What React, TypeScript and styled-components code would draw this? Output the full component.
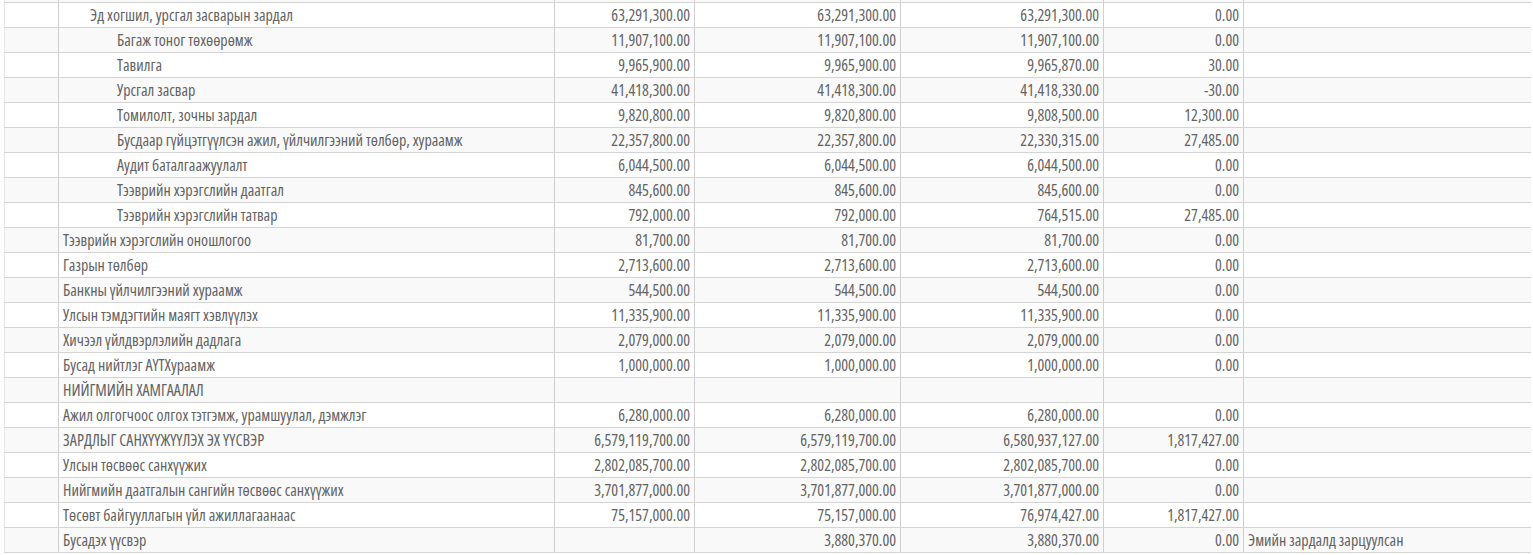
import React from "react";
import styled, { createGlobalStyle } from "styled-components";

const GlobalStyle = createGlobalStyle`
  html, body {
    margin: 0;
    padding: 0;
    background: #ffffff;
    overflow: hidden;
  }
`;

const Page = styled.div`
  padding-left: 4px;
  height: 555px;
  overflow: hidden;
`;

const Scroller = styled.div`
  margin-top: -23px;
`;

const Table = styled.table`
  width: 1526px;
  table-layout: fixed;
  border-collapse: collapse;
  font-family: "Open Sans", "Liberation Sans", sans-serif;
  font-stretch: 75%;
  font-weight: 400;
  font-size: 16px;
  color: #636363;
  border-left: 1px solid #e6e6e6;
`;

const Row = styled.tr<{ $striped: boolean }>`
  background: ${(p) => (p.$striped ? "#f9f9f9" : "#ffffff")};
`;

const Cell = styled.td`
  height: 24px;
  padding: 0 4px;
  border-top: 1px solid #d4d4d4;
  border-bottom: 1px solid #d4d4d4;
  border-left: 1px solid #cfcfcf;
  white-space: nowrap;
  overflow: hidden;
  line-height: 24px;
  &:first-child {
    border-left: none;
  }
`;

const NameCell = styled(Cell)<{ $level: number }>`
  padding-left: ${(p) => 4 + p.$level * 27}px;
`;

const NumCell = styled(Cell)`
  text-align: right;
`;

const NoteCell = styled(Cell)`
  text-align: left;
`;

type Line = {
  name: string;
  level: number;
  nums: string[];
  note?: string;
};

const rows: Line[] = [
  { name: "", level: 0, nums: ["", "", "", ""] },
  { name: "Эд хогшил, урсгал засварын зардал", level: 1, nums: ["63,291,300.00", "63,291,300.00", "63,291,300.00", "0.00"] },
  { name: "Багаж тоног төхөөрөмж", level: 2, nums: ["11,907,100.00", "11,907,100.00", "11,907,100.00", "0.00"] },
  { name: "Тавилга", level: 2, nums: ["9,965,900.00", "9,965,900.00", "9,965,870.00", "30.00"] },
  { name: "Урсгал засвар", level: 2, nums: ["41,418,300.00", "41,418,300.00", "41,418,330.00", "-30.00"] },
  { name: "Томилолт, зочны зардал", level: 2, nums: ["9,820,800.00", "9,820,800.00", "9,808,500.00", "12,300.00"] },
  { name: "Бусдаар гүйцэтгүүлсэн ажил, үйлчилгээний төлбөр, хураамж", level: 2, nums: ["22,357,800.00", "22,357,800.00", "22,330,315.00", "27,485.00"] },
  { name: "Аудит баталгаажуулалт", level: 2, nums: ["6,044,500.00", "6,044,500.00", "6,044,500.00", "0.00"] },
  { name: "Тээврийн хэрэгслийн даатгал", level: 2, nums: ["845,600.00", "845,600.00", "845,600.00", "0.00"] },
  { name: "Тээврийн хэрэгслийн татвар", level: 2, nums: ["792,000.00", "792,000.00", "764,515.00", "27,485.00"] },
  { name: "Тээврийн хэрэгслийн оношлогоо", level: 0, nums: ["81,700.00", "81,700.00", "81,700.00", "0.00"] },
  { name: "Газрын төлбөр", level: 0, nums: ["2,713,600.00", "2,713,600.00", "2,713,600.00", "0.00"] },
  { name: "Банкны үйлчилгээний хураамж", level: 0, nums: ["544,500.00", "544,500.00", "544,500.00", "0.00"] },
  { name: "Улсын тэмдэгтийн маягт хэвлүүлэх", level: 0, nums: ["11,335,900.00", "11,335,900.00", "11,335,900.00", "0.00"] },
  { name: "Хичээл үйлдвэрлэлийн дадлага", level: 0, nums: ["2,079,000.00", "2,079,000.00", "2,079,000.00", "0.00"] },
  { name: "Бусад нийтлэг АҮТХураамж", level: 0, nums: ["1,000,000.00", "1,000,000.00", "1,000,000.00", "0.00"] },
  { name: "НИЙГМИЙН ХАМГААЛАЛ", level: 0, nums: ["", "", "", ""] },
  { name: "Ажил олгогчоос олгох тэтгэмж, урамшуулал, дэмжлэг", level: 0, nums: ["6,280,000.00", "6,280,000.00", "6,280,000.00", "0.00"] },
  { name: "ЗАРДЛЫГ САНХҮҮЖҮҮЛЭХ ЭХ ҮҮСВЭР", level: 0, nums: ["6,579,119,700.00", "6,579,119,700.00", "6,580,937,127.00", "1,817,427.00"] },
  { name: "Улсын төсвөөс санхүүжих", level: 0, nums: ["2,802,085,700.00", "2,802,085,700.00", "2,802,085,700.00", "0.00"] },
  { name: "Нийгмийн даатгалын сангийн төсвөөс санхүүжих", level: 0, nums: ["3,701,877,000.00", "3,701,877,000.00", "3,701,877,000.00", "0.00"] },
  { name: "Төсөвт байгууллагын үйл ажиллагаанаас", level: 0, nums: ["75,157,000.00", "75,157,000.00", "76,974,427.00", "1,817,427.00"] },
  { name: "Бусадэх үүсвэр", level: 0, nums: ["", "3,880,370.00", "3,880,370.00", "0.00"], note: "Эмийн зардалд зарцуулсан" },
];

const widths = [54, 496, 140, 206, 203, 140, 287];

export default function App() {
  return (
    <>
      <GlobalStyle />
      <Page>
        <Scroller>
          <Table>
            <colgroup>
              {widths.map((w, i) => (
                <col key={i} style={{ width: w }} />
              ))}
            </colgroup>
            <tbody>
              {rows.map((r, i) => (
                <Row key={i} $striped={i % 2 === 0}>
                  <Cell />
                  <NameCell $level={r.level}>{r.name}</NameCell>
                  {r.nums.map((n, j) => (
                    <NumCell key={j}>{n}</NumCell>
                  ))}
                  <NoteCell>{r.note ?? ""}</NoteCell>
                </Row>
              ))}
            </tbody>
          </Table>
        </Scroller>
      </Page>
    </>
  );
}
